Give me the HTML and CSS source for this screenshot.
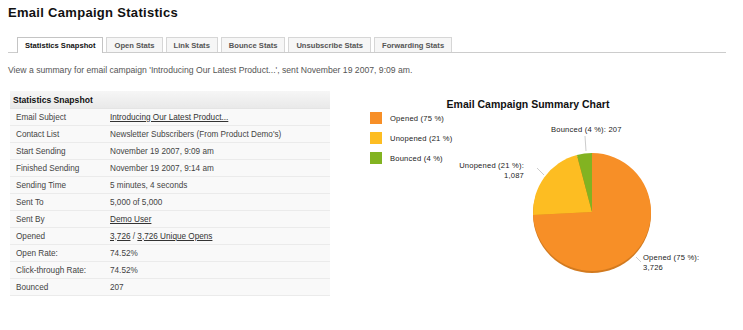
FILE: index.html
```html
<!DOCTYPE html>
<html>
<head>
    <meta charset="UTF-8">
    <title>Email Campaign Statistics</title>
    <link rel="stylesheet" href="styles.css">
</head>
<body>
<div class="page">
    <h1 class="title">Email Campaign Statistics</h1>

    <ul class="tabs">
        <li class="tab active">Statistics Snapshot</li>
        <li class="tab">Open Stats</li>
        <li class="tab">Link Stats</li>
        <li class="tab">Bounce Stats</li>
        <li class="tab">Unsubscribe Stats</li>
        <li class="tab">Forwarding Stats</li>
    </ul>

    <p class="intro">View a summary for email campaign 'Introducing Our Latest Product...', sent November 19 2007, 9:09 am.</p>

    <div class="content">
        <table class="snapshot">
            <tr class="head"><th colspan="2">Statistics Snapshot</th></tr>
            <tr><td class="label">Email Subject</td><td><a href="#">Introducing Our Latest Product...</a></td></tr>
            <tr><td class="label">Contact List</td><td>Newsletter Subscribers (From Product Demo's)</td></tr>
            <tr><td class="label">Start Sending</td><td>November 19 2007, 9:09 am</td></tr>
            <tr><td class="label">Finished Sending</td><td>November 19 2007, 9:14 am</td></tr>
            <tr><td class="label">Sending Time</td><td>5 minutes, 4 seconds</td></tr>
            <tr><td class="label">Sent To</td><td>5,000 of 5,000</td></tr>
            <tr><td class="label">Sent By</td><td><a href="#">Demo User</a></td></tr>
            <tr><td class="label">Opened</td><td><a href="#">3,726</a> / <a href="#">3,726 Unique Opens</a></td></tr>
            <tr><td class="label">Open Rate:</td><td>74.52%</td></tr>
            <tr><td class="label">Click-through Rate:</td><td>74.52%</td></tr>
            <tr><td class="label">Bounced</td><td>207</td></tr>
        </table>

        <div class="chart">
            <svg width="400" height="200" viewBox="0 0 400 200">
                <text class="chart-title" x="188" y="18" text-anchor="middle">Email Campaign Summary Chart</text>

                <!-- legend -->
                <rect x="30" y="22" width="12" height="12" fill="#f78f27"/>
                <rect x="30" y="42" width="12" height="12" fill="#fdbd22"/>
                <rect x="30" y="62" width="12" height="12" fill="#82b321"/>
                <text class="chart-text" x="50" y="31">Opened (75 %)</text>
                <text class="chart-text" x="50" y="51">Unopened (21 %)</text>
                <text class="chart-text" x="50" y="71">Bounced (4 %)</text>

                <!-- pie, with a darker rim underneath -->
                <circle cx="252" cy="124" r="59" fill="#d27a1f"/>
                <path d="M252,122 L252,63 A59,59 0 1 1 193.07,124.88 Z" fill="#f78f27"/>
                <path d="M252,122 L193.07,124.88 A59,59 0 0 1 236.93,64.96 Z" fill="#fdbd22"/>
                <path d="M252,122 L236.93,64.96 A59,59 0 0 1 252,63 Z" fill="#82b321"/>

                <!-- labels -->
                <line x1="245" y1="46" x2="246" y2="61" stroke="#cccccc"/>
                <line x1="197" y1="78" x2="204" y2="85" stroke="#cccccc"/>
                <line x1="296" y1="167" x2="301" y2="172" stroke="#cccccc"/>
                <text class="chart-text" x="211" y="42">Bounced (4 %): 207</text>
                <text class="chart-text" x="184" y="78" text-anchor="end">Unopened (21 %):</text>
                <text class="chart-text" x="184" y="88" text-anchor="end">1,087</text>
                <text class="chart-text" x="303" y="170">Opened (75 %):</text>
                <text class="chart-text" x="303" y="180">3,726</text>
            </svg>
        </div>
    </div>
</div>
</body>
</html>
```

FILE: styles.css
```css
html, body, h1, ul, li, p, table {
    margin: 0;
    padding: 0;
}

body {
    background: #fff;
    font-family: "Liberation Sans", Arial, sans-serif;
    color: #333;
}

.page {
    padding: 0 0 0 8px;
}

.title {
    padding-top: 4px;
    font-size: 13px;
    line-height: 17px;
    letter-spacing: 0.3px;
    font-weight: bold;
    color: #111;
}

.tabs {
    display: flex;
    gap: 3px;
    margin: 16px 17px 0 0;
    padding-left: 9px;
    list-style: none;
    border-bottom: 1px solid #cccccc;
}

.tab {
    padding: 0 7px;
    height: 14px;
    line-height: 15px;
    font-size: 7.6px;
    font-weight: bold;
    color: #555;
    background: #f6f6f6;
    border: 1px solid #d6d6d6;
    border-bottom: none;
    margin-bottom: -1px;
    box-sizing: content-box;
}

.tab.active {
    color: #111;
    background: #fff;
    border-color: #c4c4c4;
    height: 15px;
}

.intro {
    margin-top: 11px;
    font-size: 8.65px;
    line-height: 12px;
    color: #555;
}

.content {
    display: flex;
    margin-top: 15px;
}

.snapshot {
    flex-shrink: 0;
    width: 320px;
    margin-left: 2px;
    border-collapse: collapse;
    font-size: 8.2px;
    color: #444;
}

.snapshot th {
    height: 17px;
    padding: 0 3px;
    text-align: left;
    font-size: 8.6px;
    color: #111;
    background: linear-gradient(#f6f6f6, #e9e9e9);
    border-bottom: 1px solid #e4e4e4;
}

.snapshot td {
    height: 16px;
    padding: 0 0 0 6px;
    background: #f9f9f9;
    border-bottom: 1px solid #ebebeb;
}

.snapshot td.label {
    width: 88px;
}

.snapshot a {
    color: #333;
}

.chart {
    flex-shrink: 0;
    margin-left: 10px;
    margin-top: -1px;
}

.chart-title {
    font-family: "Liberation Sans", Arial, sans-serif;
    font-size: 10.5px;
    font-weight: bold;
    fill: #111;
}

.chart-text {
    font-family: "Liberation Sans", Arial, sans-serif;
    font-size: 7.6px;
    letter-spacing: 0.2px;
    fill: #222;
}
```
